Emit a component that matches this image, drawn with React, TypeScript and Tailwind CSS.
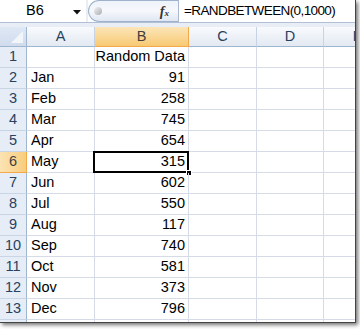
import React from 'react';

const months = ['Jan', 'Feb', 'Mar', 'Apr', 'May', 'Jun', 'Jul', 'Aug', 'Sep', 'Oct', 'Nov', 'Dec'];
const values = [91, 258, 745, 654, 315, 602, 550, 117, 740, 581, 373, 796];
const cols = ['A', 'B', 'C', 'D', 'E'];
const widths = ['w-[68px]', 'w-[94px]', 'w-[68px]', 'w-[67px]', 'w-[68px]'];

const font = { fontFamily: '"Liberation Sans", Arial, sans-serif' };

function FormulaBar() {
  return (
    <div className="flex h-[23px] border-b border-[#b1c0d4] bg-white">
      {/* name box */}
      <div className="relative w-[86px] shrink-0 flex items-center pl-[26px] text-[14.5px] text-black">
        B6
        <svg className="absolute left-[73px] top-[10px]" width="8" height="5" viewBox="0 0 8 5">
          <path d="M0 0 L8 0 L4 4.5 Z" fill="#111" />
        </svg>
      </div>
      {/* grip + fx */}
      <div className="w-[2px] shrink-0 bg-[#e9eef5]" />
      <div className="relative w-[90px] shrink-0 rounded-l-full border border-r-0 border-[#9fb2cb] bg-gradient-to-b from-[#eef3fa] via-[#f6f8fc] to-[#dfe7f2] flex items-center">
        <div className="ml-[5px] w-[8px] h-[8px] rounded-full bg-gradient-to-br from-[#f4f4f4] to-[#a8acb2]" />
        <span className="ml-auto mr-[9px] text-[14px] italic font-bold text-[#333]" style={{ fontFamily: '"Liberation Serif", serif' }}>
          f<span className="text-[9px] align-baseline">x</span>
        </span>
      </div>
      <div className="w-[1px] shrink-0 bg-[#a9b8cc]" />
      <div className="flex-1 flex items-center pl-[5px] text-[13.5px] tracking-[-0.6px] text-black whitespace-nowrap overflow-hidden">
        =RANDBETWEEN(0,1000)
      </div>
    </div>
  );
}

function HeaderRow() {
  return (
    <div className="flex h-[20px]">
      <div className="relative w-[27px] shrink-0 bg-gradient-to-b from-[#dfe8f5] to-[#d0dced] border-r border-b border-[#9eb6ce]">
        <svg className="absolute right-[3px] bottom-[3px]" width="12" height="12" viewBox="0 0 12 12">
          <path d="M12 0 L12 12 L0 12 Z" fill="#f2f6fb" />
        </svg>
      </div>
      {cols.map((c, i) => (
        <div
          key={c}
          className={`${widths[i]} shrink-0 flex items-center justify-center text-[14.5px] border-r border-b ${
            c === 'B'
              ? 'bg-gradient-to-b from-[#fce5b8] to-[#f7c971] border-[#f1a94a] text-[#3f3f3f]'
              : 'bg-gradient-to-b from-[#f8fafd] to-[#e3e9f2] border-r-[#c5d3e4] border-b-[#9eb6ce] text-[#27415f]'
          }`}
        >
          {c}
        </div>
      ))}
    </div>
  );
}

function Row({ n, month, value }: { n?: number; month?: string; value?: number | string }) {
  const sel = n === 6;
  return (
    <div className="flex h-[21px]">
      <div
        className={`w-[27px] shrink-0 flex items-center justify-center text-[14.5px] border-b border-r ${
          sel
            ? 'bg-gradient-to-r from-[#fce3b3] to-[#f8cd7c] border-[#f1a94a] text-[#3f3f3f]'
            : 'bg-[#e6edf7] border-b-[#c8d5e6] border-r-[#9eb6ce] text-[#27415f]'
        }`}
      >
        {n}
      </div>
      <div className="w-[68px] shrink-0 flex items-center pl-[4px] text-[14.5px] text-black border-r border-b border-[#d5dce8]">
        {month}
      </div>
      <div className="relative w-[94px] shrink-0 flex items-center justify-end pr-[3px] text-[14.5px] text-black border-r border-b border-[#d5dce8]">
        {value}
        {sel && (
          <>
            <div className="absolute -left-[2px] -top-[1px] -right-[1px] -bottom-[1px] border-2 border-black" />
            <div className="absolute -right-[4px] -bottom-[4px] w-[6px] h-[6px] bg-black border border-white" />
          </>
        )}
      </div>
      <div className="w-[68px] shrink-0 border-r border-b border-[#d5dce8]" />
      <div className="w-[67px] shrink-0 border-r border-b border-[#d5dce8]" />
      <div className="w-[68px] shrink-0 border-r border-b border-[#d5dce8]" />
    </div>
  );
}

export default function App() {
  return (
    <div className="w-[360px] h-[329px] bg-white" style={font}>
      <div className="w-[356px] h-[323px] overflow-hidden bg-white border-r border-b border-[#444] shadow-[2px_2px_4px_rgba(0,0,0,0.55)]">
        <FormulaBar />
        <div className="h-[4px] bg-[#e9eef6]" />
        <HeaderRow />
        <Row n={1} value="Random Data" />
        {months.map((m, i) => (
          <Row key={m} n={i + 2} month={m} value={values[i]} />
        ))}
        <Row />
      </div>
    </div>
  );
}
